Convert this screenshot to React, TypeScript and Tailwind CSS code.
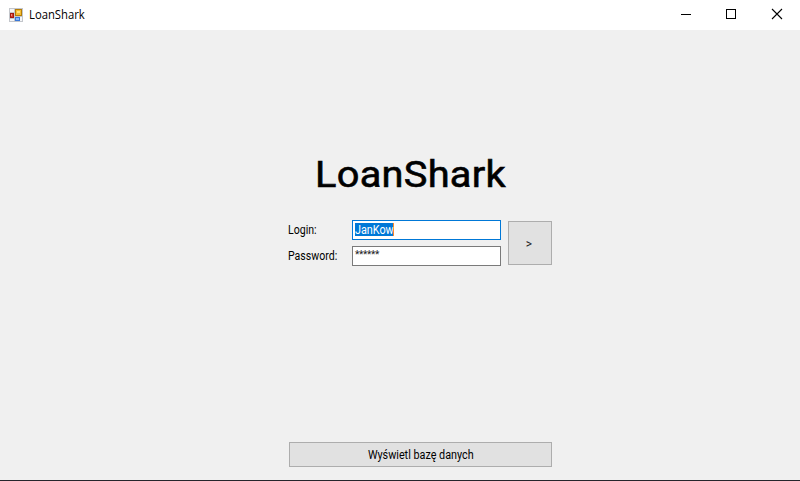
function FormIcon() {
  return (
    <svg width="14" height="14" viewBox="0 0 14 14" shapeRendering="crispEdges">
      <rect width="14" height="14" fill="#c3c6cb" />
      <path d="M1 1h4v3H1zM1 11h4v2H1z" fill="#f4f5f7" />
      <rect x="1" y="5" width="4" height="5" fill="#a31a12" />
      <rect x="2" y="6" width="2" height="3" fill="#d3392c" />
      <rect x="2" y="6" width="1" height="2" fill="#f08a78" />
      <rect x="6" y="1" width="7" height="7" fill="#b57d08" />
      <rect x="7" y="2" width="5" height="5" fill="#f4bd32" />
      <rect x="8" y="3" width="3" height="2" fill="#ffdf7a" />
      <rect x="6" y="9" width="5" height="4" fill="#3a78d8" />
      <rect x="7" y="10" width="3" height="2" fill="#8bb9f8" />
      <rect x="11" y="9" width="2" height="4" fill="#f4f5f7" />
    </svg>
  );
}

function WindowControls() {
  return (
    <div className="flex items-center">
      <svg width="45" height="30" shapeRendering="crispEdges">
        <rect x="17" y="14" width="10" height="1" fill="#000" />
      </svg>
      <svg width="45" height="30" shapeRendering="crispEdges">
        <rect x="17.5" y="9.5" width="9" height="9" fill="none" stroke="#000" />
      </svg>
      <svg width="46" height="30">
        <path d="M18 9l10 10M28 9L18 19" stroke="#000" strokeWidth="1.1" />
      </svg>
    </div>
  );
}

export default function App() {
  return (
    <div className="flex h-[481px] w-[800px] flex-col overflow-hidden border-b border-[#25252b] bg-[#f0f0f0] font-[Roboto,sans-serif] text-[12px] leading-[14px] text-black">
      <header className="flex h-[30px] shrink-0 items-center justify-between bg-white">
        <div className="flex items-center pl-[9px]">
          <FormIcon />
          <span className="ml-1.5 origin-left scale-x-[0.94] font-['Open_Sans',sans-serif] text-[12px]">LoanShark</span>
        </div>
        <WindowControls />
      </header>
      <main className="flex flex-1 flex-col pl-[288px]">
        <h1 className="mt-[122px] ml-[27px] h-[45px] origin-left scale-x-[1.075] text-[37px] leading-[45px] font-normal tracking-[0.25px] [-webkit-text-stroke:0.6px_black]">LoanShark</h1>
        <div className="mt-[23px] flex">
          <div className="flex w-[64px] flex-col gap-1.5">
            <label className="h-5 origin-left scale-x-[0.88] leading-[20px]">Login:</label>
            <label className="h-5 origin-left scale-x-[0.88] leading-[20px]">Password:</label>
          </div>
          <div className="flex flex-col gap-1.5">
            <div className="h-5 w-[149px] border border-[#0078d7] bg-white pt-0.5 pl-0.5">
              <div className="h-[13px] w-[39px] border-r border-[#ff8728] bg-[#0078d7] whitespace-nowrap text-white">
                <span className="block origin-left scale-x-[0.9]">JanKow</span>
              </div>
            </div>
            <div className="h-5 w-[149px] border border-[#7a7a7a] bg-white pt-px pl-0.5 text-[10px] tracking-[-0.3px] text-[#222]">******</div>
          </div>
          <button className="mt-px ml-[7px] h-[44px] w-[44px] border border-[#adadad] bg-[#e1e1e1] pt-px pr-0.5 text-[#222]">&gt;</button>
        </div>
        <button className="mt-[176px] ml-px h-[25px] w-[263px] border border-[#adadad] bg-[#e1e1e1]">
          <span className="inline-block scale-x-[0.9]">Wyświetl bazę danych</span>
        </button>
      </main>
    </div>
  );
}
